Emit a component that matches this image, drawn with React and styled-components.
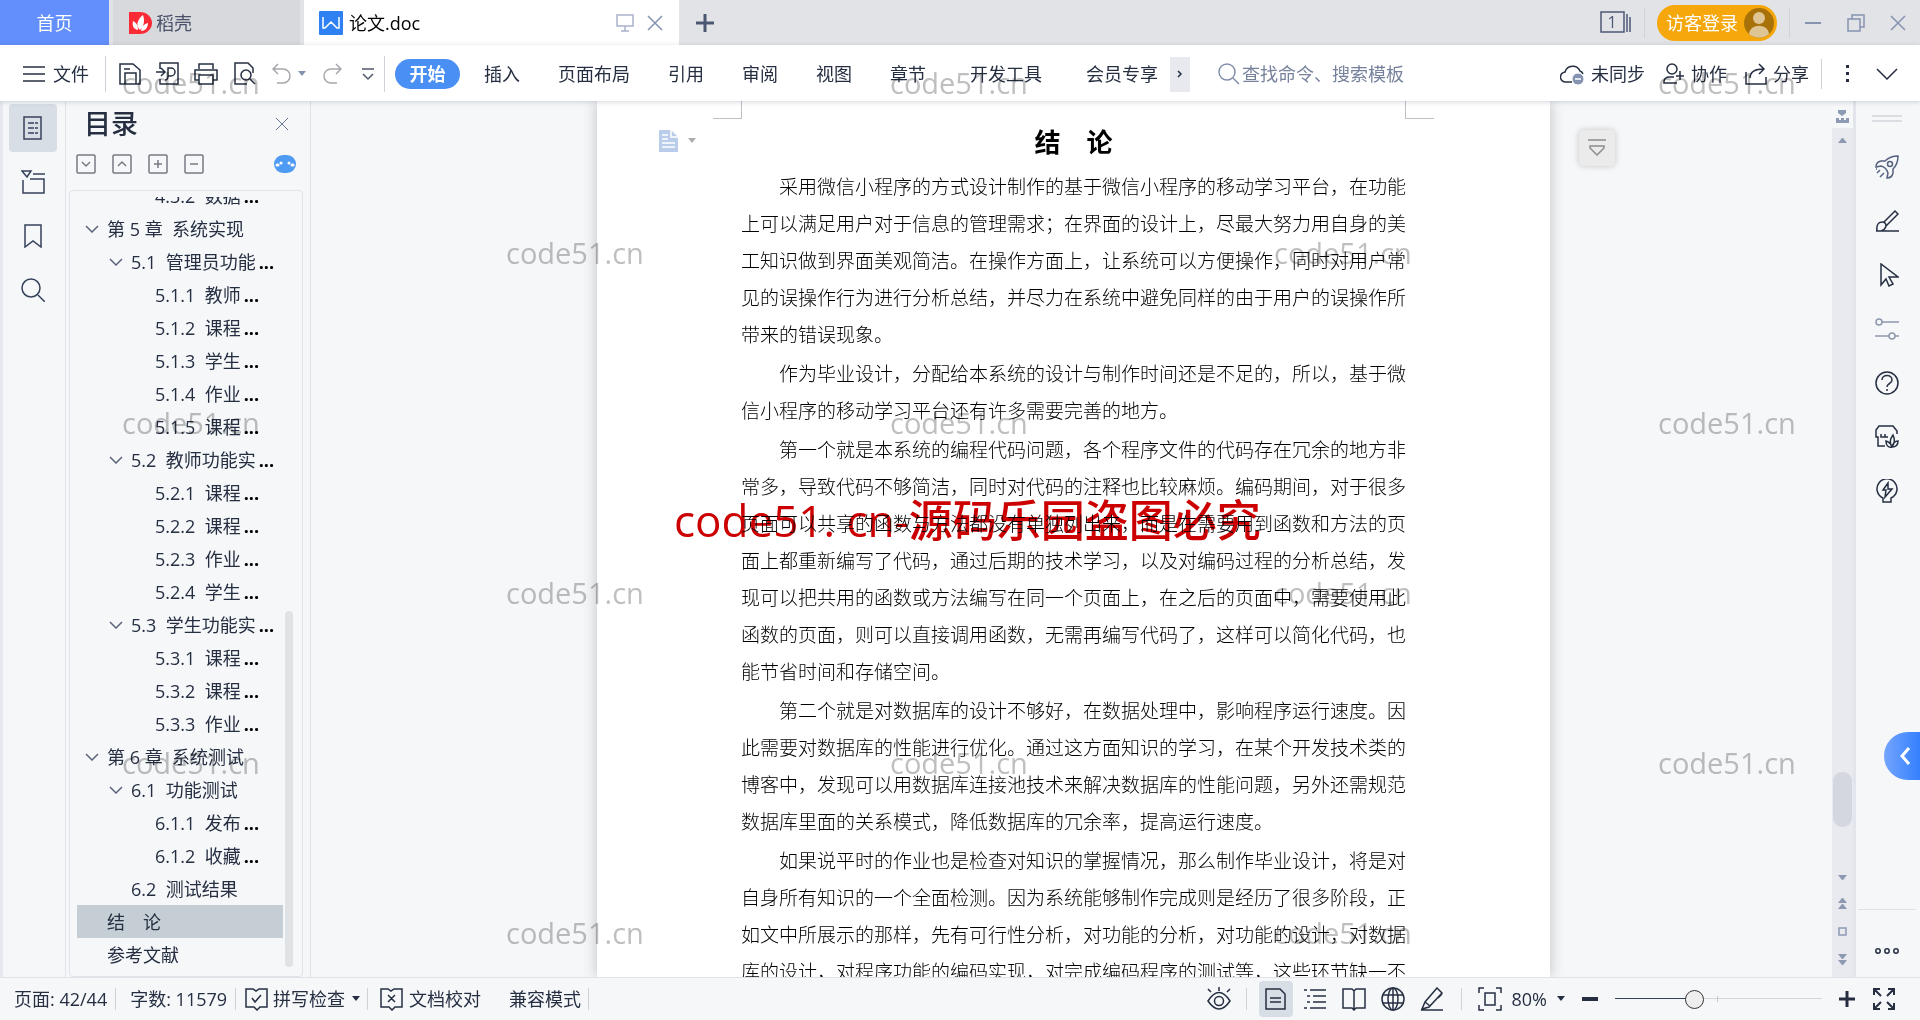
import React, { useState } from "react";
import styled, { createGlobalStyle } from "styled-components";

const GlobalStyle = createGlobalStyle`
  * {
    box-sizing: border-box;
  }
  body {
    margin: 0;
    overflow: hidden;
    font-family: "Open Sans", "Noto Sans CJK SC", sans-serif;
    font-size: 18px;
    line-height: 24px;
    color: #262f42;
  }
  button, input {
    font: inherit;
    color: inherit;
    border: 0;
    padding: 0;
    margin: 0;
    background: none;
  }
  svg {
    display: block;
    flex: none;
    fill: none;
    stroke: currentColor;
  }
  p, h1, h2 {
    margin: 0;
  }
`;

const Shell = styled.div`
  position: relative;
  height: 100vh;
  display: flex;
  flex-direction: column;
  overflow: hidden;
  background: #f5f7f9;
`;

// title bar

const TabBar = styled.header`
  height: 45px;
  flex: none;
  display: flex;
  background: #e2e3e7;
`;

const HomeTab = styled.button`
  width: 109px;
  color: #fff;
  background: #628ffb;
`;

const DocerTab = styled.button`
  width: 187px;
  margin: 0 4px;
  padding-left: 16px;
  display: flex;
  align-items: center;
  gap: 4px;
  color: #48526a;
  background: #d8d9dd;
`;

const FileTab = styled.div`
  width: 375px;
  padding: 0 12px 0 15px;
  display: flex;
  align-items: center;
  gap: 6px;
  color: #000;
  background: #fff;
  .name{
    flex: 1;
  }
`;

const IconButton = styled.button`
  display: flex;
  align-items: center;
  justify-content: center;
  flex: none;
  width: ${props => props.$w || 24}px;
  height: ${props => props.$h || 24}px;
  color: ${props => props.$color || "#262f42"};
`;

const Spacer = styled.div`
  flex: 1;
`;

const Line = styled.span`
  flex: none;
  width: 1px;
  height: ${props => props.$h || 30}px;
  background: #cfd2d9;
`;

const WindowArea = styled.div`
  display: flex;
  align-items: center;
`;

const WindowCount = styled(IconButton)`
  margin-right: 12px;
`;

const LoginButton = styled.button`
  width: 120px;
  height: 36px;
  margin: 0 12px;
  padding: 0 3px 0 9px;
  display: flex;
  align-items: center;
  justify-content: space-between;
  border-radius: 18px;
  color: #fff;
  background: #f5a70b;
`;

// menu bar

const MenuBar = styled.nav`
  height: 56px;
  flex: none;
  padding: 2px 18px 0 21px;
  display: flex;
  align-items: center;
  white-space: nowrap;
  background: #fff;
  box-shadow: 0 1px 5px rgba(40, 50, 70, .2);
  z-index: 2;
`;

const MenuButton = styled.button`
  display: flex;
  align-items: center;
  gap: ${props => props.$gap || 6}px;
`;

const QuickTools = styled.div`
  display: flex;
  align-items: center;
  gap: 14px;
  margin: 0 6px 0 12px;
`;

const UndoGroup = styled.div`
  display: flex;
  align-items: center;
  gap: 4px;
`;

const MenuTabs = styled.div`
  display: flex;
  align-items: center;
  gap: ${props => props.$gap}px;
  margin-left: ${props => props.$left}px;
`;

const StartTab = styled.button`
  width: 65px;
  height: 30px;
  margin-left: 10px;
  border-radius: 15px;
  color: #fff;
  font-weight: bold;
  background: #4a90f4;
`;

const MoreTabs = styled(IconButton)`
  margin: 0 28px 0 12px;
  background: #e7e9ee;
`;

const Search = styled.label`
  display: flex;
  align-items: center;
  gap: 2px;
  color: #8490aa;
  input{
    width: 220px;
    outline: 0;
  }
  input::placeholder{
    color: #76829c;
    opacity: 1;
  }
`;

const ShareArea = styled.div`
  display: flex;
  align-items: center;
  gap: 18px;
  margin-right: 12px;
`;

// workspace

const Workspace = styled.div`
  flex: 1;
  min-height: 0;
  display: flex;
`;

const LeftRail = styled.aside`
  width: 66px;
  flex: none;
  padding: 3px 0 0 6px;
  display: flex;
  flex-direction: column;
  gap: 6px;
  border-left: 3px solid #e6e8ed;
  border-right: 1px solid #e1e3ea;
`;

const RailButton = styled(IconButton)`
  width: 48px;
  height: 48px;
  border-radius: 4px;
  color: #36425c;
  background: ${props => (props.$active ? "#d8dee5" : "none")};
`;

const TocPanel = styled.section`
  width: 245px;
  flex: none;
  padding: 0 7px 0 3px;
  display: flex;
  flex-direction: column;
  border-right: 1px solid #dfe2e8;
`;

const TocHead = styled.div`
  height: 45px;
  padding: 0 13px 0 15px;
  display: flex;
  align-items: center;
  justify-content: space-between;
  h2{
    font-size: 27px;
    font-weight: 500;
    line-height: 36px;
  }
`;

const TocTools = styled.div`
  height: 36px;
  margin-bottom: 8px;
  padding: 0 7px;
  display: flex;
  align-items: center;
  gap: 16px;
`;

const TreeBox = styled.div`
  flex: 1;
  min-height: 0;
  padding: 6px 9px 5px 7px;
  display: flex;
  border: 1px solid #e0e3ea;
  border-radius: 4px;
`;

const Tree = styled.div`
  flex: 1;
  min-width: 0;
  display: flex;
  flex-direction: column;
  justify-content: flex-end;
  overflow: hidden;
`;

const TreeRow = styled.button`
  height: 33px;
  flex: none;
  padding-left: ${props => 8 + props.$level * 24}px;
  display: flex;
  align-items: center;
  text-align: left;
  white-space: pre;
  background: ${props => (props.$active ? "#c6ced5" : "none")};
  .arrow{
    width: 22px;
    color: #5a6478;
  }
  .dots{
    margin-left: 3px;
    font-weight: bold;
    color: #000;
  }
`;

const TreeThumb = styled.div`
  width: 8px;
  height: 46%;
  margin: 0 0 4px 2px;
  align-self: flex-end;
  border-radius: 4px;
  background: #dfe3e6;
`;

const Canvas = styled.main`
  flex: 1;
  min-width: 0;
  padding-left: 4px;
  display: grid;
  grid-template-columns: 1fr 953px 1fr;
  overflow: hidden;
`;

const Sheet = styled.article`
  grid-column: 2;
  min-height: 0;
  background: #fff;
  box-shadow: 0 0 14px rgba(0, 0, 0, .22);
`;

const CropMarks = styled.div`
  height: 18px;
  padding: 0 116px;
  display: flex;
  justify-content: space-between;
  span{
    width: 29px;
    border-bottom: 1px solid #bfc1c4;
  }
  span:first-child{
    border-right: 1px solid #bfc1c4;
  }
  span:last-child{
    border-left: 1px solid #bfc1c4;
  }
`;

const TitleRow = styled.div`
  height: 48px;
  padding-bottom: 4px;
  display: grid;
  grid-template-columns: 144px 1fr 144px;
  align-items: center;
  h1{
    font: bold 26px/36px "Noto Sans CJK SC", sans-serif;
    text-align: center;
    color: #000;
  }
`;

const ParagraphTool = styled.button`
  display: flex;
  align-items: center;
  gap: 10px;
  padding-left: 62px;
  color: #adadad;
`;

const Body = styled.div`
  padding: 0 144px;
  font: 300 19px/37px "Noto Sans CJK SC", sans-serif;
  color: #000;
  p{
    margin-bottom: 2px;
    text-indent: 2em;
    text-align: justify;
  }
`;

const FloatButton = styled(IconButton)`
  margin: 29px 0 0 29px;
  border-radius: 4px;
  color: #8c8c8c;
  background: #ebebeb;
  box-shadow: 0 0 6px rgba(0, 0, 0, .2);
`;

const ScrollColumn = styled.div`
  width: 24px;
  flex: none;
  display: flex;
  flex-direction: column;
  align-items: center;
  padding: 9px 0 12px;
  color: #8d9ab3;
  border-right: 3px solid #e3e5ed;
  background: linear-gradient(#f5f7f9 27px, #e8eaf0 27px);
`;

const ScrollTrack = styled.div`
  flex: 1;
  padding-bottom: 48px;
  display: flex;
  align-items: flex-end;
  div{
    width: 19px;
    height: 55px;
    border-radius: 9px;
    background: #d4d7df;
  }
`;

const ScrollKeys = styled.div`
  display: flex;
  flex-direction: column;
  gap: 18px;
`;

const RightRail = styled.aside`
  width: 64px;
  flex: none;
  display: flex;
  flex-direction: column;
  align-items: center;
  padding: 14px 2px 0 0;
  gap: 26px;
  hr{
    width: 58px;
    margin: 0;
    border: 0;
    border-top: 1px solid #dfe1e6;
  }
`;

const RightTools = styled.div`
  flex: 1;
  display: flex;
  flex-direction: column;
  gap: 26px;
  padding-top: 4px;
`;

const RailMore = styled(IconButton)`
  margin: 3px 0 14px;
`;

const SideHandle = styled.button`
  position: absolute;
  right: 0;
  top: 732px;
  width: 36px;
  height: 48px;
  padding-left: 15px;
  border-radius: 24px 0 0 24px;
  color: #fff;
  background: linear-gradient(90deg, #74a5fd, #3480fe);
`;

// status bar

const StatusBar = styled.footer`
  height: 43px;
  flex: none;
  padding: 0 24px 0 14px;
  display: flex;
  align-items: center;
  white-space: nowrap;
  background: #f5f7f9;
  border-top: 1px solid #dfe2e7;
`;

const StatusGroup = styled.div`
  display: flex;
  align-items: center;
  gap: ${props => props.$gap}px;
  margin-left: ${props => props.$left || 0}px;
`;

const ViewButton = styled(IconButton)`
  width: 34px;
  height: 36px;
  border-radius: 4px;
  background: ${props => (props.$active ? "#d8dee5" : "none")};
`;

const Zoom = styled.input`
  appearance: none;
  width: 207px;
  height: 20px;
  background:
    linear-gradient(#c3c8d1, #c3c8d1) 102px 7px / 1px 6px no-repeat,
    linear-gradient(90deg, #36425c 79px, #d3d6db 79px) 0 9px / 100% 1px no-repeat;
  &::-webkit-slider-thumb{
    appearance: none;
    width: 19px;
    height: 19px;
    border: 1px solid #333;
    border-radius: 50%;
    background: #eee;
  }
`;

// stamps lie over the whole window

const Stamps = styled.div`
  position: absolute;
  inset: 63px 0 0 0;
  z-index: 5;
  pointer-events: none;
  mix-blend-mode: multiply;
  font-family: "Open Sans", sans-serif;
  font-size: 29px;
  line-height: 40px;
  color: #bfbfbf;
`;

const StampRow = styled.div`
  height: 170px;
  display: grid;
  grid-template-columns: 40% 40% 20%;
  padding-left: ${props => (props.$shift ? 506 : 122)}px;
  margin-right: ${props => (props.$shift ? -506 : -122)}px;
`;

const RedStamp = styled.div`
  position: absolute;
  left: 674px;
  top: 490px;
  z-index: 6;
  pointer-events: none;
  mix-blend-mode: multiply;
  font-size: 44px;
  font-weight: 500;
  line-height: 60px;
  white-space: nowrap;
  color: #cc0000;
`;

const Icon = ({ d, w = 24, h = 24, sw = 1.5, fill, children }) => (
  <svg width={w} height={h} viewBox={`0 0 ${w} ${h}`} strokeWidth={sw} aria-hidden="true">
    {d && <path d={d} fill={fill ? "currentColor" : "none"} stroke={fill ? "none" : "currentColor"} />}
    {children}
  </svg>
);

const Caret = () => <Icon w={8} h={6} fill d="M0 0h8L4 5z" />;

const outline = [
  { text: "4.3.2  数据", level: 2, cut: true },
  { text: "第 5 章  系统实现", level: 0, open: true },
  { text: "5.1  管理员功能", level: 1, open: true, cut: true },
  { text: "5.1.1  教师", level: 2, cut: true },
  { text: "5.1.2  课程", level: 2, cut: true },
  { text: "5.1.3  学生", level: 2, cut: true },
  { text: "5.1.4  作业", level: 2, cut: true },
  { text: "5.1.5  课程", level: 2, cut: true },
  { text: "5.2  教师功能实", level: 1, open: true, cut: true },
  { text: "5.2.1  课程", level: 2, cut: true },
  { text: "5.2.2  课程", level: 2, cut: true },
  { text: "5.2.3  作业", level: 2, cut: true },
  { text: "5.2.4  学生", level: 2, cut: true },
  { text: "5.3  学生功能实", level: 1, open: true, cut: true },
  { text: "5.3.1  课程", level: 2, cut: true },
  { text: "5.3.2  课程", level: 2, cut: true },
  { text: "5.3.3  作业", level: 2, cut: true },
  { text: "第 6 章  系统测试", level: 0, open: true },
  { text: "6.1  功能测试", level: 1, open: true },
  { text: "6.1.1  发布", level: 2, cut: true },
  { text: "6.1.2  收藏", level: 2, cut: true },
  { text: "6.2  测试结果", level: 1 },
  { text: "结　论", level: 0 },
  { text: "参考文献", level: 0 },
];

const levelTools = [
  { name: "展开", d: "M6 8l4 4 4-4" },
  { name: "收起", d: "M6 12l4-4 4 4" },
  { name: "增加级别", d: "M6 10h8M10 6v8" },
  { name: "减少级别", d: "M6 10h8" },
];

const paragraphs = [
  "采用微信小程序的方式设计制作的基于微信小程序的移动学习平台，在功能上可以满足用户对于信息的管理需求；在界面的设计上，尽最大努力用自身的美工知识做到界面美观简洁。在操作方面上，让系统可以方便操作，同时对用户常见的误操作行为进行分析总结，并尽力在系统中避免同样的由于用户的误操作所带来的错误现象。",
  "作为毕业设计，分配给本系统的设计与制作时间还是不足的，所以，基于微信小程序的移动学习平台还有许多需要完善的地方。",
  "第一个就是本系统的编程代码问题，各个程序文件的代码存在冗余的地方非常多，导致代码不够简洁，同时对代码的注释也比较麻烦。编码期间，对于很多页面可以共享的函数与方法都没有单独列出来，而是在需要用到函数和方法的页面上都重新编写了代码，通过后期的技术学习，以及对编码过程的分析总结，发现可以把共用的函数或方法编写在同一个页面上，在之后的页面中，需要使用此函数的页面，则可以直接调用函数，无需再编写代码了，这样可以简化代码，也能节省时间和存储空间。",
  "第二个就是对数据库的设计不够好，在数据处理中，影响程序运行速度。因此需要对数据库的性能进行优化。通过这方面知识的学习，在某个开发技术类的博客中，发现可以用数据库连接池技术来解决数据库的性能问题，另外还需规范数据库里面的关系模式，降低数据库的冗余率，提高运行速度。",
  "如果说平时的作业也是检查对知识的掌握情况，那么制作毕业设计，将是对自身所有知识的一个全面检测。因为系统能够制作完成则是经历了很多阶段，正如文中所展示的那样，先有可行性分析，对功能的分析，对功能的设计，对数据库的设计，对程序功能的编码实现，对完成编码程序的测试等，这些环节缺一不",
];

const TitleBar = () => (
  <TabBar>
    <HomeTab>首页</HomeTab>
    <DocerTab>
      <Icon w={23}>
        <path d="M0 1h11a12 11 0 0 1 0 22H0z" fill="#fc2a35" stroke="none" />
        <path d="M11 19C6 14 9 8 14 4c2 6 1 11-3 15zM9 19c-5-1-6-5-5-9 4 2 5 5 5 9zM12 20c1-5 3-7 7-8 0 5-3 8-7 8z" fill="#fff" stroke="none" />
      </Icon>
      稻壳
    </DocerTab>
    <FileTab>
      <Icon>
        <rect width="24" height="24" rx="1" fill="#2f80f2" stroke="none" />
        <path d="M4 6v11h2l6-6 6 6h2V6" stroke="#fff" />
      </Icon>
      <span className="name">论文.doc</span>
      <IconButton aria-label="演示" $color="#a9b3cb">
        <Icon w={18} h={18} d="M1 1h16v11H1zM9 12v5M5 17h8" />
      </IconButton>
      <IconButton aria-label="关闭文件" $color="#8592b0">
        <Icon w={16} h={16} d="M1 1l14 14M15 1L1 15" />
      </IconButton>
    </FileTab>
    <IconButton aria-label="新建" $w={52} $h={45} $color="#4a5672">
      <Icon w={18} h={18} sw={3} d="M9 0v18M0 9h18" />
    </IconButton>
    <Spacer />
    <WindowArea>
      <WindowCount aria-label="窗口" $w={32} $color="#4d5a77">
        <Icon w={32} h={24}>
          <path d="M1 1h23v20H1zM27 3v18M30 6v15" />
          <text x="12" y="17" textAnchor="middle" fontSize="16" fill="currentColor" stroke="none">1</text>
        </Icon>
      </WindowCount>
      <Line />
      <LoginButton>
        访客登录
        <Icon w={30} h={30}>
          <circle cx="15" cy="15" r="15" fill="#a87208" stroke="none" />
          <circle cx="15" cy="10" r="6" fill="#dfc494" stroke="none" />
          <path d="M5 26c1-11 19-11 20 0a15 15 0 0 1-20 0z" fill="#dfc494" stroke="none" />
        </Icon>
      </LoginButton>
      <Line />
      <IconButton aria-label="最小化" $w={46} $color="#8592b0"><Icon w={16} h={16} sw={2} d="M0 8h16" /></IconButton>
      <IconButton aria-label="还原" $w={40} $color="#8592b0"><Icon w={18} h={18} d="M1 5h12v12H1zM5 5V1h12v12h-4" /></IconButton>
      <IconButton aria-label="关闭" $w={44} $color="#8592b0"><Icon w={16} h={16} d="M1 1l14 14M15 1L1 15" /></IconButton>
    </WindowArea>
  </TabBar>
);

const Menu = () => (
  <MenuBar>
    <MenuButton $gap={8}>
      <Icon d="M2 5h22M2 12h22M2 19h22" />
      文件
    </MenuButton>
    <MenuTabs $left={16}><Line $h={36} /></MenuTabs>
    <QuickTools>
      <IconButton aria-label="保存"><Icon d="M2 2h13l7 6v14H2zM7 22V11h11v11M6 7h6" /></IconButton>
      <IconButton aria-label="输出为PDF"><Icon d="M4 7V1h18v21H4v-5M0 10h9M5 6l4 4-4 4M9 18q3 0 3-4V6h3a4 4 0 0 1 0 8h-3" /></IconButton>
      <IconButton aria-label="打印"><Icon d="M5 7V2h14v5M5 18H1V8h22v10h-4M5 13h14v9H5z" /></IconButton>
      <IconButton aria-label="打印预览"><Icon d="M15 22H3V1h13l5 5v5M18 17l5 5"><circle cx="14" cy="13" r="5" /></Icon></IconButton>
      <UndoGroup>
        <IconButton aria-label="撤销" $color="#a6a8ad"><Icon w={20} d="M6 2L1 7l5 5M1 7h10a7 7 0 0 1 0 14H5" /></IconButton>
        <IconButton aria-label="撤销列表" $w={8} $color="#8592b0"><Caret /></IconButton>
      </UndoGroup>
      <IconButton aria-label="恢复" $color="#a6a8ad"><Icon w={20} d="M14 2l5 5-5 5M19 7H9a7 7 0 0 0 0 14h6" /></IconButton>
      <IconButton aria-label="更多工具" $w={20} $color="#505869"><Icon w={12} h={14} d="M0 2h12M1 7l5 5 5-5" /></IconButton>
    </QuickTools>
    <Line $h={36} />
    <StartTab>开始</StartTab>
    <MenuTabs $gap={38} $left={24}>
      {["插入", "页面布局", "引用", "审阅", "视图", "章节"].map(name => (
        <MenuButton key={name}>{name}</MenuButton>
      ))}
    </MenuTabs>
    <MenuTabs $gap={44} $left={44}>
      <MenuButton>开发工具</MenuButton>
      <MenuButton>会员专享</MenuButton>
    </MenuTabs>
    <MoreTabs aria-label="更多选项卡" $w={20} $h={35}>
      <Icon w={6} h={8} d="M1 1l3 3-3 3" />
    </MoreTabs>
    <Search>
      <Icon w={22}><circle cx="9" cy="10" r="8" /><path d="M15 16l6 6" /></Icon>
      <input type="text" aria-label="搜索" placeholder="查找命令、搜索模板" />
    </Search>
    <Spacer />
    <ShareArea>
      <MenuButton>
        <Icon w={25} d="M12 20H6a5 5 0 0 1-1-10 8 8 0 0 1 15-1 5 5 0 0 1 3 3">
          <circle cx="18" cy="17" r="6" fill="#8592b0" stroke="#fff" strokeWidth="1" />
          <path d="M15 17h6" stroke="#fff" />
        </Icon>
        未同步
      </MenuButton>
      <MenuButton>
        <Icon w={22}><circle cx="9" cy="7" r="5" /><path d="M14 21H1v-2q1-4 5-4h5M17 9v9M13 14h8" /></Icon>
        协作
      </MenuButton>
      <MenuButton>
        <Icon w={22} d="M1 10v12h20v-7M5 16c0-6 5-9 14-9M14 2l5 5-5 5" />
        分享
      </MenuButton>
    </ShareArea>
    <Line />
    <IconButton aria-label="更多" $w={50}><Icon w={3} h={18} fill d="M0 0h3v3H0zM0 7h3v3H0zM0 14h3v3H0z" /></IconButton>
    <IconButton aria-label="收起" $w={30}><Icon w={22} h={12} d="M1 1l10 10L21 1" /></IconButton>
  </MenuBar>
);

const Toc = () => {
  const [current, setCurrent] = useState("结　论");

  return (
    <TocPanel>
      <TocHead>
        <h2>目录</h2>
        <IconButton aria-label="关闭目录" $w={16} $color="#6b7690"><Icon w={14} h={14} sw={1} d="M1 1l12 12M13 1L1 13" /></IconButton>
      </TocHead>
      <TocTools>
        {levelTools.map(tool => (
          <IconButton key={tool.name} $w={20} $h={20} $color="#777b83" aria-label={tool.name}>
            <Icon w={20} h={20} d={tool.d}><rect x="1" y="1" width="18" height="18" rx="1" /></Icon>
          </IconButton>
        ))}
        <Spacer />
        <IconButton aria-label="智能识别目录" $w={22} $color="#4f9af3">
          <Icon w={22} h={20}>
            <rect width="22" height="18" y="1" rx="9" fill="currentColor" stroke="none" />
            <path d="M3 11h1M7 9h0M15 9h0M18 11h1" stroke="#fff" strokeWidth="3" strokeLinecap="round" />
          </Icon>
        </IconButton>
      </TocTools>
      <TreeBox>
        <Tree>
          {outline.map(item => (
            <TreeRow
              key={item.text}
              $level={item.level}
              $active={item.text === current}
              onClick={() => setCurrent(item.text)}
            >
              <span className="arrow">{item.open && <Icon w={14} h={8} d="M1 1l6 6 6-6" />}</span>
              <span>{item.text}</span>
              {item.cut && <span className="dots">...</span>}
            </TreeRow>
          ))}
        </Tree>
        <TreeThumb />
      </TreeBox>
    </TocPanel>
  );
};

const Document = () => (
  <Canvas>
    <Sheet>
      <CropMarks><span /><span /></CropMarks>
      <TitleRow>
        <ParagraphTool aria-label="段落布局">
          <Icon w={19} h={22}>
            <path d="M0 0h12l7 7v15H0z" fill="#b9cdea" stroke="none" />
            <path d="M3 5h6M3 9h6M3 13h13M3 17h13M12 0v7h7" stroke="#fff" />
          </Icon>
          <Caret />
        </ParagraphTool>
        <h1>结　论</h1>
      </TitleRow>
      <Body>
        {paragraphs.map(text => <p key={text.slice(0, 4)}>{text}</p>)}
      </Body>
    </Sheet>
    <FloatButton aria-label="收起工具" $w={36} $h={36}>
      <Icon w={18} h={18} d="M0 1h18M2 7h14v2l-7 7-7-7z" />
    </FloatButton>
  </Canvas>
);

const Scroller = () => (
  <ScrollColumn>
    <Icon w={13} h={13} fill d="M2 0h8v3L6 6 2 3zM0 8h3v2h2V8h3v2h2V8h3v5H0z" />
    <Icon w={9} h={25} fill d="M0 20l4-5h1l4 5z" />
    <ScrollTrack><div /></ScrollTrack>
    <ScrollKeys>
      <Icon w={9} h={5} fill d="M0 0h9L5 5H4z" />
      <Icon w={9} h={11} fill d="M0 5l4-5h1l4 5zM0 11l4-5h1l4 5z" />
      <Icon w={9} h={9} d="M1 1h7v7H1z" />
      <Icon w={9} h={11} fill d="M0 0h9L5 5H4zM0 6h9l-4 5H4z" />
    </ScrollKeys>
  </ScrollColumn>
);

const ToolRail = () => (
  <RightRail>
    <Icon w={30} h={8} sw={1}><path d="M0 1h30M0 6h30" stroke="#bfc3ca" /></Icon>
    <RightTools>
      <IconButton $h={28} $color="#56627f" aria-label="快捷">
        <Icon d="M6 11L1 12q0-5 5-6l4 0q5-5 13-5 0 8-5 13l0 4q-1 5-6 5l1-5q-2-6-7-7zM2 18l3-3M5 22l4-4M1 14h1"><circle cx="15" cy="9" r="2.5" /></Icon>
      </IconButton>
      <IconButton $h={28} aria-label="样式">
        <Icon d="M9 13L20 2l3 3-12 12M1 22h23M2 22q-1-9 5-9 4 0 4 4-1 4-5 5" />
      </IconButton>
      <IconButton $h={28} aria-label="选择">
        <Icon d="M6 1v21l5-6 3 7 4-2-4-7h9z" />
      </IconButton>
      <IconButton $h={28} $color="#8d98ad" aria-label="属性">
        <Icon d="M7 5h17M0 19h14M20 19h4"><circle cx="4" cy="5" r="3" /><circle cx="17" cy="19" r="3" /></Icon>
      </IconButton>
      <IconButton $h={28} aria-label="帮助">
        <Icon d="M7 9c0-6 10-6 10 0 0 4-5 3-5 7M12 18v2"><circle cx="12" cy="12" r="11" /></Icon>
      </IconButton>
      <IconButton $h={28} aria-label="资源">
        <Icon d="M22 9V6l-4-5H4L1 5v7h2v9h7M6 9v3h4V9v3h3M17 22c-3-4-2-8 1-12 2 4 2 8-1 12zM17 22c-4 1-6-2-6-6 3 1 5 3 6 6zM17 22c1-4 3-6 6-6 0 4-2 6-6 6z" />
      </IconButton>
      <IconButton $h={28} aria-label="灵感">
        <Icon d="M8 19a10 10 0 1 1 8 0v4H8zM13 4l-5 7h3l-1 7 7-8h-4z" />
      </IconButton>
    </RightTools>
    <hr />
    <RailMore aria-label="更多面板">
      <Icon><circle cx="3" cy="12" r="2.2" /><circle cx="12" cy="12" r="2.2" /><circle cx="21" cy="12" r="2.2" /></Icon>
    </RailMore>
  </RightRail>
);

const Status = () => (
  <StatusBar>
    <StatusGroup $gap={8}><span>页面: 42/44</span><Line $h={22} /></StatusGroup>
    <StatusGroup $gap={8} $left={14}><span>字数: 11579</span><Line $h={22} /></StatusGroup>
    <StatusGroup $gap={7} $left={9}>
      <MenuButton $gap={5}>
        <Icon w={23} d="M1 2h7l3 2 3-2h8v18h-7l-3 3-3-3H1zM7 11l3 4 6-7" />
        拼写检查
      </MenuButton>
      <Caret />
      <Line $h={22} />
    </StatusGroup>
    <StatusGroup $gap={28} $left={12}>
      <MenuButton>
        <Icon w={23} d="M1 2h7l3 2 3-2h8v18h-7l-3 3-3-3H1zM8 8l7 7M15 8l-7 7" />
        文档校对
      </MenuButton>
      <StatusGroup $gap={7}><span>兼容模式</span><Line $h={22} /></StatusGroup>
    </StatusGroup>
    <Spacer />
    <StatusGroup $gap={15}>
      <IconButton aria-label="护眼模式">
        <Icon d="M1 14q11-17 22 0-11 16-22 0zM12 0v4M1 2l3 3M23 2l-3 3"><circle cx="12" cy="14" r="4.5" /></Icon>
      </IconButton>
      <Line $h={22} />
    </StatusGroup>
    <StatusGroup $gap={5} $left={12}>
      <ViewButton $active aria-label="页面视图"><Icon d="M2 2h14l5 5v15H2zM6 11h11M6 15h11" /></ViewButton>
      <ViewButton aria-label="大纲"><Icon d="M1 3h3M7 3h16M4 9h3M10 9h13M4 15h3M10 15h13M1 21h3M7 21h16" /></ViewButton>
      <ViewButton aria-label="阅读版式"><Icon d="M1 2h9l2 2 2-2h9v19h-9l-2 2-2-2H1zM12 4v18" /></ViewButton>
      <ViewButton aria-label="Web版式">
        <Icon d="M2 8h20M2 16h20M12 1v22"><circle cx="12" cy="12" r="11" /><ellipse cx="12" cy="12" rx="5" ry="11" /></Icon>
      </ViewButton>
      <ViewButton aria-label="写作模式"><Icon d="M2 22L5 15 17 1l5 5L9 20zM5 15l5 4M18 11l4-4M1 23h22" /></ViewButton>
    </StatusGroup>
    <StatusGroup $gap={16} $left={12}>
      <Line $h={22} />
      <StatusGroup $gap={17}>
        <MenuButton $gap={10}>
          <Icon d="M1 6V1h5M18 1h5v5M23 18v5h-5M6 23H1v-5M7 6h10v12H7z" />
          80%
          <Caret />
        </MenuButton>
        <IconButton aria-label="缩小" $w={16}><Icon w={16} h={16} sw={4} d="M0 8h16" /></IconButton>
        <Zoom type="range" aria-label="缩放" min="0" max="100" defaultValue="37" />
        <IconButton aria-label="放大" $w={16}><Icon w={16} h={16} sw={3} d="M0 8h16M8 0v16" /></IconButton>
        <IconButton aria-label="全屏">
          <Icon d="M2 8V2h6M2 2l7 7M16 2h6v6M22 2l-7 7M2 16v6h6M2 22l7-7M22 16v6h-6M22 22l-7-7" sw={2} />
        </IconButton>
      </StatusGroup>
    </StatusGroup>
  </StatusBar>
);

const App = () => (
  <>
    <GlobalStyle />
    <Shell>
      <TitleBar />
      <Menu />
      <Workspace>
        <LeftRail>
          <RailButton $active aria-label="目录"><Icon d="M3 1h17v22H3zM7 7h6M7 12h6M7 17h6M14 7h3M14 12h3M14 17h3" /></RailButton>
          <RailButton aria-label="章节"><Icon d="M1 1h9l-4 6zM12 4h12M9 9h14v14H2V10" /></RailButton>
          <RailButton aria-label="书签"><Icon d="M4 1h16v22l-8-6-8 6z" /></RailButton>
          <RailButton aria-label="查找"><Icon d="M17 17l7 7"><circle cx="10" cy="10" r="9" /></Icon></RailButton>
        </LeftRail>
        <Toc />
        <Document />
        <Scroller />
        <ToolRail />
      </Workspace>
      <Status />
      <SideHandle aria-label="展开侧栏"><Icon w={12} h={20} sw={3} d="M10 2l-7 8 7 8" /></SideHandle>
      <Stamps aria-hidden="true">
        {[0, 1, 2, 3, 4, 5].map(row => (
          <StampRow key={row} $shift={row % 2 === 1}>
            <span>code51.cn</span>
            <span>code51.cn</span>
            {row % 2 === 0 && <span>code51.cn</span>}
          </StampRow>
        ))}
      </Stamps>
      <RedStamp aria-hidden="true">code51. cn-源码乐园盗图必究</RedStamp>
    </Shell>
  </>
);

export default App;
